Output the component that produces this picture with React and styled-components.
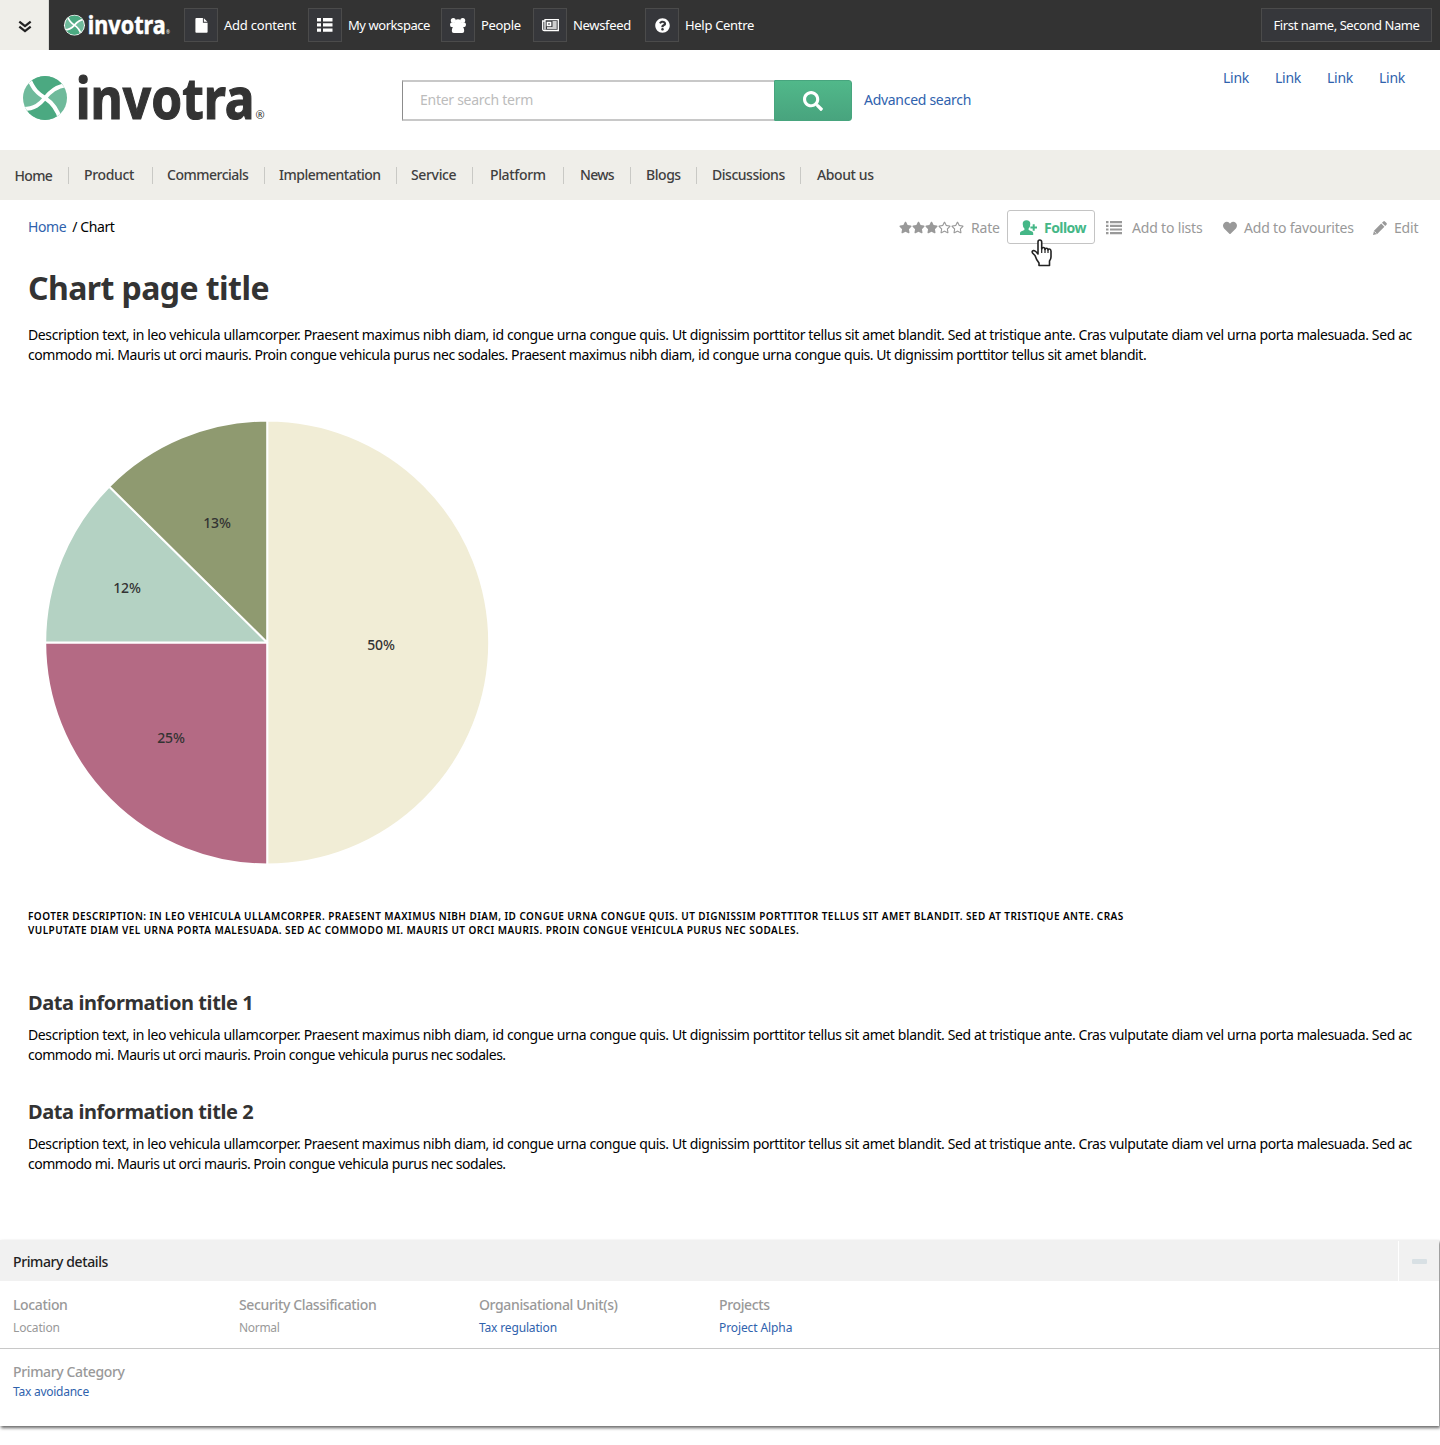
import React from "react";
import styled, { createGlobalStyle } from "styled-components";
import { FaHeart, FaQuestionCircle, FaSearch, FaStar, FaRegStar } from "react-icons/fa";

const sans = '"Noto Sans", "Open Sans", sans-serif';

const Global = createGlobalStyle`
  * { box-sizing: border-box; }
  body { margin: 0; background: #fff; font: 14px/20px ${sans}; color: #000; }
  h1, h2, p, dl, dt, dd { margin: 0; }
  a { color: #2f62ad; text-decoration: none; }
  svg { display: block; flex: none; overflow: visible; }
`;

const Page = styled.div`
  width: 1440px;
  height: 1445px;
  overflow: hidden;
`;

const Topbar = styled.header`
  display: flex;
  align-items: center;
  height: 50px;
  background: #333;
  color: #fff;
`;
const Toggle = styled.button`
  display: grid;
  place-items: center;
  width: 49px;
  height: 50px;
  padding: 3px 0 0 2px;
  border: 0;
  border-right: 1px solid #d9d9d5;
  background: #efeee9;
`;
const TopLogo = styled.div`
  width: 135px;
  padding: 1px 0 0 15px;
`;
const TopItem = styled.div`
  display: flex;
  align-items: center;
  width: ${(p) => p.$width}px;
  font-size: 13px;
  letter-spacing: ${(p) => p.$track}px;
  white-space: nowrap;
`;
const IconBox = styled.span`
  display: grid;
  place-items: center;
  width: 34px;
  height: 34px;
  margin-right: 6px;
  border: 1px solid #4b4b4b;
  background: #36373b;
`;
const UserButton = styled.button`
  width: 171px;
  height: 34px;
  margin: 0 8px 0 auto;
  padding: 0;
  border: 1px solid #4b4b4b;
  background: #36373b;
  color: #fff;
  font: 13px/20px ${sans};
  letter-spacing: -0.44px;
  white-space: nowrap;
`;

const Masthead = styled.div`
  display: flex;
  height: 100px;
`;
const BrandLogo = styled.div`
  width: 402px;
  padding: 20px 0 0 20px;
`;
const Search = styled.form`
  display: flex;
  align-items: center;
  height: 41px;
  margin-top: 30px;
`;
const SearchInput = styled.input`
  width: 372px;
  height: 41px;
  padding: 0 0 2px 17px;
  border: 2px solid #c8c8c8;
  border-left: 1px solid #8c8c8c;
  border-right: 0;
  outline: 0;
  font: 14px/20px ${sans};
  letter-spacing: -0.27px;
  &::placeholder { color: #bcbcbc; opacity: 1; }
`;
const SearchButton = styled.button`
  display: grid;
  place-items: center;
  width: 78px;
  height: 41px;
  padding: 0;
  border: 1px solid #47a57e;
  border-radius: 0 3px 3px 0;
  background: linear-gradient(#51b88a, #48a47e);
  color: #fff;
`;
const Advanced = styled.a`
  margin: 0 0 2px 12px;
  letter-spacing: -0.29px;
  white-space: nowrap;
`;
const QuickLinks = styled.div`
  display: flex;
  gap: 26px;
  margin: 18px 35px 0 auto;
  a { width: 26px; letter-spacing: -0.27px; }
`;

const Nav = styled.nav`
  display: flex;
  align-items: center;
  height: 50px;
  background: #efeee9;
`;
const NavItem = styled.a`
  width: ${(p) => p.$width}px;
  height: 17px;
  padding-left: ${(p) => p.$pad}px;
  border-right: ${(p) => (p.$last ? 0 : 1)}px solid #c9c9c5;
  color: #3f3f3f;
  font-weight: 500;
  line-height: ${(p) => (p.$first ? 17 : 15)}px;
  letter-spacing: ${(p) => p.$track}px;
  white-space: nowrap;
`;

const Tools = styled.div`
  display: flex;
  justify-content: space-between;
  align-items: center;
  height: 34px;
  margin-top: 10px;
  padding: 0 20px 0 28px;
`;
const Crumbs = styled.div`
  display: flex;
  gap: 6px;
  letter-spacing: -0.4px;
`;
const Actions = styled.div`
  display: flex;
  align-items: center;
  color: #999;
`;
const Action = styled.div`
  display: flex;
  align-items: center;
  gap: ${(p) => p.$gap}px;
  width: ${(p) => p.$width}px;
  padding-top: 1px;
  letter-spacing: ${(p) => p.$track}px;
  white-space: nowrap;
`;
const Stars = styled.span`
  display: flex;
`;
const FollowButton = styled.button`
  position: relative;
  display: flex;
  align-items: center;
  gap: 6px;
  width: 88px;
  height: 34px;
  margin: 0 11px 0 0;
  padding: 1px 0 0 12px;
  border: 1px solid #c4c4c4;
  border-radius: 3px;
  background: #fff;
  color: #45b787;
  font: 700 14px/20px ${sans};
  letter-spacing: -0.54px;
`;
const Cursor = styled.svg`
  position: absolute;
  left: 23px;
  top: 28px;
`;

const Article = styled.main`
  height: 996px;
  padding: 24px 0 0 28px;
`;
const Title = styled.h1`
  color: #333;
  font: 700 32px/40px ${sans};
  letter-spacing: -0.57px;
`;
const Copy = styled.p`
  white-space: nowrap;
`;
const Line = styled.span`
  display: block;
  letter-spacing: ${(p) => p.$track}px;
`;
const Intro = styled(Copy)`
  margin-top: 17px;
`;
const Pie = styled.svg`
  margin: 52px 0 0 14px;
`;
const FooterNote = styled.p`
  margin-top: 42px;
  font: 600 10px/14px ${sans};
  letter-spacing: 0.44px;
  text-transform: uppercase;
  white-space: nowrap;
`;
const Section = styled.section`
  margin-top: ${(p) => p.$top}px;
`;
const SectionTitle = styled.h2`
  margin-bottom: 8px;
  color: #333;
  font: 700 20px/28px ${sans};
  letter-spacing: -0.42px;
`;

const Panel = styled.section`
  width: 1439px;
  height: 186px;
  box-shadow: 1px 2px 3px rgba(0, 0, 0, 0.6);
`;
const PanelHead = styled.div`
  display: flex;
  align-items: stretch;
  height: 41px;
  background: #f1f1f1;
  color: #222;
  font-weight: 500;
  letter-spacing: -0.4px;
`;
const PanelTitle = styled.div`
  flex: 1;
  padding: 12px 13px;
`;
const Collapse = styled.div`
  display: grid;
  place-items: center;
  width: 41px;
  margin-top: 1px;
  border-left: 1px solid #fff;
`;
const Minus = styled.span`
  width: 15px;
  height: 5px;
  border-radius: 1px;
  background: #d8e0e4;
`;
const Details = styled.dl`
  display: grid;
  grid-template-columns: 226px 240px 240px 240px;
  height: ${(p) => p.$height}px;
  padding: ${(p) => (p.$rule ? 14 : 13)}px 13px 0;
  border-bottom: ${(p) => (p.$rule ? 1 : 0)}px solid #c8c8c8;
`;
const Term = styled.dt`
  color: #999;
  font-weight: 500;
  letter-spacing: -0.36px;
`;
const Value = styled.dd`
  padding-top: ${(p) => p.$gap}px;
  color: #999;
  font-size: 12px;
  line-height: 20px;
  letter-spacing: ${(p) => p.$track ?? -0.16}px;
`;

function Mark() {
  return (
    <>
      <clipPath id="disc"><circle cx="22" cy="22" r="22" /></clipPath>
      <g clipPath="url(#disc)">
        <path fill="#6fba9b" d="M0 0h44v44H0z" />
        <path fill="#4ba981" d="M6 2C10 14 16 18 22 22C27 16 33 10 45 9V-2H4zM0 33C12 33 17 28 22 22C28 26 34 32 37 43V46H0z" />
        <path fill="none" stroke="#fff" strokeWidth="4" d="M6 2C10 14 16 18 22 22S34 32 37 43M45 9C33 10 27 16 22 22S12 33 0 33" />
      </g>
    </>
  );
}

function Wordmark({ fill }) {
  return (
    <>
      <text transform="translate(52.800 42.800) scale(.855 1)" fill={fill} stroke={fill} strokeWidth="1.200" fontFamily="Noto Sans" fontWeight="700" fontSize="58">invotra</text>
      <text x="232.500" y="43" fill={fill} fontFamily="Noto Sans" fontSize="11">®</text>
    </>
  );
}

const FileIcon = () => (
  <svg width="13" height="15" viewBox="0 0 13 16" fill="#fff"><path d="M0 1q0-1 1-1h7v5h5v10q0 .8-1 .8H1q-1 0-1-.8zM9 .2L12.8 4H9z" /></svg>
);
const TilesIcon = () => (
  <svg width="16" height="14" viewBox="0 0 16 14" fill="#fff"><path d="M0 0h4v3.400H0zM6 0h9.500v3.400H6zM0 5.200h4v3.400H0zM6 5.200h9.500v3.400H6zM0 10.400h4v3.400H0zM6 10.400h9.500v3.400H6z" /></svg>
);
const PeopleIcon = () => (
  <svg width="16" height="15" viewBox="0 0 16 15" fill="#fff">
    <circle cx="3.300" cy="2.500" r="2.500" /><circle cx="12.700" cy="2.500" r="2.500" /><circle cx="8" cy="4.800" r="3.500" />
    <path d="M0 6.500Q0 4.500 2 4.500h12q2 0 2 2T14.500 9h-13Q0 9 0 6.500zM1.800 13Q2 8.500 4.500 7.500h7q2.500 1 2.700 5.500 0 2-2 2H3.800q-2 0-2-2z" />
  </svg>
);
const NewsIcon = () => (
  <svg width="17" height="13" viewBox="0 0 17 13" fill="none" stroke="#fff" strokeWidth="1.300">
    <path d="M3 .7h13.300v10.800H2.200Q.7 11.500.7 10V2H3zM3 2v8.500" /><path d="M5.500 3.500h3v3h-3z" strokeWidth="1.700" /><path d="M10.500 3h4.200M10.500 5h4.200M10.500 7h4.200M5 9h9.700" />
  </svg>
);
const ListIcon = () => (
  <svg width="16" height="14" viewBox="0 0 16 14" fill="#999"><path d="M0 0h2.500v2.200H0zM4 0h12v2.200H4zM0 3.700h2.500v2.200H0zM4 3.700h12v2.200H4zM0 7.400h2.500v2.200H0zM4 7.400h12v2.200H4zM0 11h2.500v2.200H0zM4 11h12v2.200H4z" /></svg>
);
const FollowIcon = () => (
  <svg width="18" height="16" viewBox="0 0 18 16" fill="currentColor">
    <path d="M2.700 4Q2.700.3 6.500.3T10.300 4Q10.300 7 8.600 8.600V10l3.600 1.500q1 .5 1 1.500v2H0v-2q0-1 1-1.500L4.400 10V8.600Q2.700 7 2.700 4zM12.700 4.200h2v2.300H17v2h-2.300v2.300h-2V8.500h-2.300v-2h2.300z" />
  </svg>
);
const PencilIcon = () => (
  <svg width="14" height="14" viewBox="0 0 14 14" fill="#999">
    <path d="M0 14l1-4.200L8.200 2.600l3.200 3.200L4.200 13zM9 1.800L10.300.5q.8-.8 1.600 0l1.600 1.600q.8.800 0 1.600L12.200 5z" />
    <path d="M1.400 10.500l2.100 2.100" stroke="#fff" strokeWidth=".8" />
  </svg>
);

const topItems = [
  ["Add content", 124, -0.23, <FileIcon />],
  ["My workspace", 133, -0.44, <TilesIcon />],
  ["People", 92, -0.35, <PeopleIcon />],
  ["Newsfeed", 112, -0.32, <NewsIcon />],
  ["Help Centre", 110, -0.31, <FaQuestionCircle size={15} />],
];
const navItems = [
  ["Home", 69, 14.5, -0.65], ["Product", 84, 15, -0.35], ["Commercials", 112, 14, -0.5],
  ["Implementation", 132, 14, -0.5], ["Service", 76, 14, -0.35], ["Platform", 91, 17, -0.35],
  ["News", 67, 16, -0.7], ["Blogs", 66, 15, -0.45], ["Discussions", 104, 15, -0.48], ["About us", 120, 16, -0.4],
];
const first = "Description text, in leo vehicula ullamcorper. Praesent maximus nibh diam, id congue urna congue quis. Ut dignissim porttitor tellus sit amet blandit. Sed at tristique ante. Cras vulputate diam vel urna porta malesuada. Sed ac";
const second = "commodo mi. Mauris ut orci mauris. Proin congue vehicula purus nec sodales.";

function Chart() {
  const label = { fill: "#333", fontSize: 14, fontWeight: 500, textAnchor: "middle", letterSpacing: -0.2, fontFamily: "Noto Sans" };
  return (
    <Pie width="450" height="450" viewBox="0 0 450 450">
      <g stroke="#fff" strokeWidth="2" strokeLinejoin="round">
        <path fill="#f1edd6" d="M225.200 225.500V3.500a222 222 0 0 1 0 444z" />
        <path fill="#b46a84" d="M225.200 225.500v222a222 222 0 0 1-222-222z" />
        <path fill="#b4d2c3" d="M225.200 225.500h-222A222 222 0 0 1 67.200 69.500z" />
        <path fill="#8f9a70" d="M225.200 225.500L67.200 69.500A222 222 0 0 1 225.200 3.500z" />
      </g>
      <text {...label} x="339" y="233">50%</text>
      <text {...label} x="129" y="326">25%</text>
      <text {...label} x="85" y="176">12%</text>
      <text {...label} x="175" y="111">13%</text>
    </Pie>
  );
}

export default function App() {
  return (
    <Page>
      <Global />
      <Topbar>
        <Toggle aria-label="Expand">
          <svg width="12" height="12" viewBox="0 0 12 12" fill="none" stroke="#222" strokeWidth="2.200"><path d="M.3.600L6 5.200 11.700.600M.3 5.600L6 10.200 11.700 5.600" /></svg>
        </Toggle>
        <TopLogo>
          <svg width="108" height="24" viewBox="-2 -3 248 54">
            <circle cx="22" cy="22" r="24" fill="#fff" />
            <Mark />
            <Wordmark fill="#fff" />
          </svg>
        </TopLogo>
        {topItems.map(([text, width, track, icon]) => (
          <TopItem key={text} $width={width} $track={track}><IconBox>{icon}</IconBox>{text}</TopItem>
        ))}
        <UserButton>First name, Second Name</UserButton>
      </Topbar>

      <Masthead>
        <BrandLogo>
          <svg width="248" height="60" viewBox="-3 -6 248 60"><Mark /><Wordmark fill="#333" /></svg>
        </BrandLogo>
        <Search>
          <SearchInput placeholder="Enter search term" />
          <SearchButton type="button" aria-label="Search"><FaSearch size={20} /></SearchButton>
          <Advanced href="#">Advanced search</Advanced>
        </Search>
        <QuickLinks>{[1, 2, 3, 4].map((n) => <a key={n} href="#">Link</a>)}</QuickLinks>
      </Masthead>

      <Nav>
        {navItems.map(([text, width, pad, track], i) => (
          <NavItem key={text} $width={width} $pad={pad} $track={track} $first={i === 0} $last={i === navItems.length - 1}>{text}</NavItem>
        ))}
      </Nav>

      <Tools>
        <Crumbs><a href="#">Home</a><span>/ Chart</span></Crumbs>
        <Actions>
          <Action $width={108} $gap={7} $track={-0.2}>
            <Stars>{[0, 1, 2, 3, 4].map((n) => (n < 3 ? <FaStar key={n} size={13} /> : <FaRegStar key={n} size={13} />))}</Stars>
            Rate
          </Action>
          <FollowButton>
            <FollowIcon />Follow
            <Cursor width="22" height="28" viewBox="0 0 22 28" fill="#fff" stroke="#222" strokeWidth="1.600" strokeLinejoin="round">
              <path d="M7 15V3Q7 1 8.800 1t1.900 2v7q0-1.500 1.600-1.500T14 10.500q0-1.300 1.500-1.300T17 11q0-1 1.400-1T20 12v6q0 2-1.500 4v4.500H8V24Q5 20 4 16.500L1.500 14Q.5 12 2.500 11.500 4.500 11.500 7 15z" />
              <path d="M10.700 9v5M14 10v4M17 11v3" strokeWidth="1.200" />
            </Cursor>
          </FollowButton>
          <Action $width={117} $gap={10} $track={-0.18}><ListIcon />Add to lists</Action>
          <Action $width={150} $gap={7} $track={-0.18}><FaHeart size={14} />Add to favourites</Action>
          <Action $width={47} $gap={7} $track={-0.2}><PencilIcon />Edit</Action>
        </Actions>
      </Tools>

      <Article>
        <Title>Chart page title</Title>
        <Intro>
          <Line $track={-0.39}>{first}</Line>
          <Line $track={-0.445}>{second} Praesent maximus nibh diam, id congue urna congue quis. Ut dignissim porttitor tellus sit amet blandit.</Line>
        </Intro>
        <Chart />
        <FooterNote>
          Footer description: in leo vehicula ullamcorper. Praesent maximus nibh diam, id congue urna congue quis. Ut dignissim porttitor tellus sit amet blandit. Sed at tristique ante. Cras<br />
          vulputate diam vel urna porta malesuada. Sed ac commodo mi. Mauris ut orci mauris. Proin congue vehicula purus nec sodales.
        </FooterNote>
        <Section $top={52}>
          <SectionTitle>Data information title 1</SectionTitle>
          <Copy><Line $track={-0.39}>{first}</Line><Line $track={-0.475}>{second}</Line></Copy>
        </Section>
        <Section $top={33}>
          <SectionTitle>Data information title 2</SectionTitle>
          <Copy><Line $track={-0.39}>{first}</Line><Line $track={-0.475}>{second}</Line></Copy>
        </Section>
      </Article>

      <Panel>
        <PanelHead><PanelTitle>Primary details</PanelTitle><Collapse><Minus /></Collapse></PanelHead>
        <Details $height={68} $rule>
          <div><Term>Location</Term><Value $gap={3}>Location</Value></div>
          <div><Term>Security Classification</Term><Value $gap={3} $track={-0.3}>Normal</Value></div>
          <div><Term>Organisational Unit(s)</Term><Value $gap={3}><a href="#">Tax regulation</a></Value></div>
          <div><Term>Projects</Term><Value $gap={3} $track={-0.1}><a href="#">Project Alpha</a></Value></div>
        </Details>
        <Details $height={77}>
          <div><Term>Primary Category</Term><Value $gap={0} $track={-0.25}><a href="#">Tax avoidance</a></Value></div>
        </Details>
      </Panel>
    </Page>
  );
}
